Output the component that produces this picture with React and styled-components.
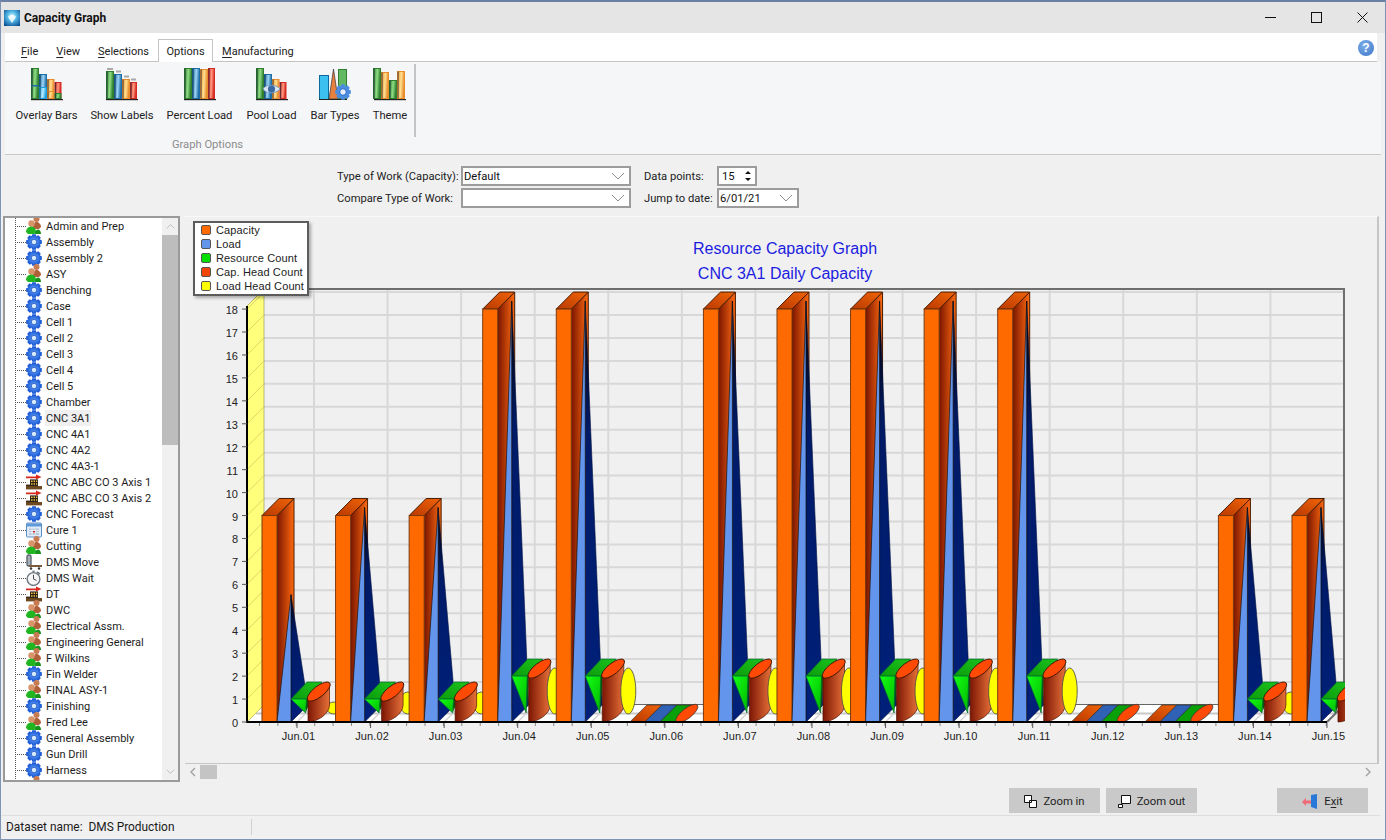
import React, { useId } from "react";
import styled, { createGlobalStyle } from "styled-components";

const UI = `Roboto, "Liberation Sans", sans-serif`;
const CHART = `"Liberation Sans", Arial, sans-serif`;

const Global = createGlobalStyle`
  html, body { margin: 0; padding: 0; background: #f0f0f0; overflow: hidden; }
  * { box-sizing: border-box; }
`;

const Window = styled.div`
  width: 1386px; height: 840px; display: flex; flex-direction: column;
  background: #f0f0f0; border: 1px solid #7f94b4; border-top: 2px solid #6a7fa4;
  font-family: ${UI}; font-size: 11px; color: #1a1a1a; overflow: hidden;
`;
const TitleBar = styled.div`
  height: 31px; flex: none; display: flex; align-items: center; background: #e5e5e5; padding-left: 3px;
`;
const AppTitle = styled.span`
  font-weight: 700; font-size: 12px; margin-left: 4px; color: #111; flex: 1;
`;
const WinButton = styled.div`
  width: 46px; height: 31px; display: flex; align-items: center; justify-content: center;
`;
const TabRow = styled.div`
  height: 29px; flex: none; margin: 0 8px 0 4px; background: #fff; border-bottom: 1px solid #c4c4c4;
  display: flex; align-items: flex-end; padding-left: 7px; position: relative;
`;
const Tab = styled.div`
  height: ${p => (p.$active ? "23px" : "22px")};
  padding: 2px 9px 0; display: flex; align-items: center; color: #222;
  ${p => p.$active && `border: 1px solid #c4c4c4; border-bottom: 0; background: #fff; margin-bottom: -1px; padding: 1px 7.5px 0;`}
`;
const Mnemonic = styled.span` text-decoration: underline; text-underline-offset: 2px; `;
const Help = styled.div`
  position: absolute; right: 3px; top: 7px; width: 16px; height: 16px; border-radius: 50%;
  background: radial-gradient(circle at 40% 35%, #7fb0ec, #3a73c4);
  color: #fff; font: 700 12px ${CHART}; display: flex; align-items: center; justify-content: center;
`;
const Ribbon = styled.div`
  height: 93px; flex: none; margin: 0 4px; background: #f5f6f8; border-bottom: 1px solid #c8c8c8; font-size: 11.2px;
`;
const RibbonGroup = styled.div`
  width: 411px; margin-top: 2px; display: flex; flex-direction: column;
`;
const RibbonButtons = styled.div`
  display: flex; gap: 14px; height: 73px; padding-left: 11px; border-right: 2px solid #c4c4c4;
`;
const RibbonButton = styled.div`
  display: flex; flex-direction: column; align-items: center; width: ${p => p.$w}px; white-space: nowrap;
`;
const RibbonIcon = styled.div` height: 42px; margin-top: 3px; `;
const RibbonLabel = styled.span` line-height: 14px; color: #222; `;
const GroupLabel = styled.div`
  text-align: center; color: #8c8c8c; padding-right: 6px; line-height: 14px; margin-top: 1px;
`;
const Filters = styled.div`
  height: 61px; flex: none; padding: 11px 0 0 336px; display: grid; font-size: 11.2px;
  grid-template-columns: 124px 170px 86px auto; grid-auto-rows: 20px; row-gap: 2px; align-items: center; justify-content: start;
`;
const FilterLabel = styled.span` white-space: nowrap; color: #222; padding-left: ${p => p.$pad || 0}px; `;
const Select = styled.div`
  height: 20px; width: ${p => p.$w}px; background: #fff; border: 2px solid #9c9c9c; display: flex; align-items: center;
  justify-content: space-between; padding: 0 4px 0 1px; color: #111;
`;
const Spinner = styled(Select)` padding-left: 3px; padding-right: 3px; `;
const Main = styled.div` flex: none; height: 566px; display: flex; padding-left: 2px; gap: 5px; align-items: flex-start; `;
const Tree = styled.div`
  width: 177px; height: 566px; flex: none; border: 2px solid #9a9a9a; background: #fff; display: flex;
`;
const TreeList = styled.div` flex: 1; overflow: hidden; `;
const TreeRow = styled.div` height: 16px; display: flex; align-items: center; padding-left: 10px; white-space: nowrap; `;
const Connector = styled.span`
  width: 11px; height: 16px; flex: none;
  background:
    repeating-linear-gradient(to bottom, #555 0 1px, transparent 1px 2px) 0 0 / 1px 100% no-repeat,
    repeating-linear-gradient(to right, #555 0 1px, transparent 1px 2px) 0 8px / 100% 1px no-repeat;
`;
const TreeLabel = styled.span`
  margin-left: 3px; padding: 1px 1px 0; line-height: 15px; color: #1c1c1c;
  background: ${p => (p.$selected ? "#f0f0f0" : "transparent")};
`;
const VScroll = styled.div` width: 16px; flex: none; background: #f0f0f0; display: flex; flex-direction: column; `;
const ScrollEnd = styled.div` height: 17px; flex: none; display: flex; align-items: center; justify-content: center; `;
const VThumb = styled.div` height: 210px; flex: none; background: #bdbdbd; `;
const Spacer = styled.div` flex: 1; `;
const ChartColumn = styled.div` width: 1194px; height: 564px; display: flex; flex-direction: column; `;
const ChartPanel = styled.div`
  position: relative; height: 548px; flex: none; background: #f0f0f0;
  border-top: 1px solid #f8f8f8; border-right: 2px solid #c6c6c6; border-bottom: 1px solid #c6c6c6;
  overflow: hidden;
`;
const ChartSvg = styled.svg` display: block; `;
const Legend = styled.div`
  position: absolute; left: 8px; top: 4px; width: 116px; height: 75px; background: #fff; border: 2px solid #5c5c5c;
  box-shadow: 2px 2px 3px rgba(0,0,0,.3); padding: 0 0 0 6px; font: 11px ${CHART}; letter-spacing: .12px; color: #222;
`;
const LegendRow = styled.div` height: 14px; display: flex; align-items: center; gap: 5px; white-space: nowrap; `;
const Swatch = styled.span`
  width: 10px; height: 10px; border: 1px solid #555; border-radius: 2px; background: ${p => p.$c}; flex: none;
`;
const HScroll = styled.div` height: 16px; flex: none; display: flex; align-items: center; padding-right: 4px; `;
const HEnd = styled.div` width: 15px; height: 16px; display: flex; align-items: center; justify-content: center; flex: none; `;
const HThumb = styled.div` width: 17px; height: 14px; background: #c4c4c4; flex: none; `;
const ButtonRow = styled.div`
  height: 34px; flex: none; display: flex; justify-content: flex-end; align-items: flex-start; gap: 6px; padding: 6px 12px 0 0;
  border-bottom: 1px solid #dedede; margin-right: 5px; font-size: 11.3px;
`;
const ActionButton = styled.div`
  width: 91px; height: 25px; background: #c9c9c9; display: flex; align-items: center; justify-content: center; gap: 6px; color: #222;
  padding-top: 2px; margin-left: ${p => p.$gap || 0}px;
`;
const StatusBar = styled.div` flex: 1; display: flex; align-items: center; padding: 0 0 2px 5px; `;
const StatusCell = styled.div` width: 246px; height: 16px; border-right: 1px solid #d0d0d0; line-height: 16px; white-space: pre; font-size: 11.9px; `;

/* ---------- icons ---------- */
function gearPath(cx, cy, R, r, n = 8) {
  let d = "";
  for (let i = 0; i < n; i++) {
    const a = (i / n) * Math.PI * 2, w = Math.PI / n;
    const p = (rad, ang) => `${(cx + rad * Math.cos(ang)).toFixed(2)} ${(cy + rad * Math.sin(ang)).toFixed(2)}`;
    d += `${i ? "L" : "M"}${p(r, a - w)} L${p(R, a - w * 0.55)} L${p(R, a + w * 0.55)} L${p(r, a + w)} `;
  }
  return d + "Z";
}
const Gear = ({ size = 16 }) => {
  const id = useId();
  return (
    <svg width={size} height={size} viewBox="0 0 16 16" style={{ flex: "none" }}>
      <defs><radialGradient id={id}><stop offset="0" stopColor="#6aa8ff" /><stop offset="1" stopColor="#1452d0" /></radialGradient></defs>
      <path d={gearPath(8, 8, 8, 6.3)} fill={`url(#${id})`} />
      <circle cx="8" cy="8" r="2.7" fill="#d8ebff" stroke="#0f48b8" strokeWidth=".7" />
    </svg>
  );
};
const People = () => (
  <svg width="16" height="16" viewBox="0 0 16 16" style={{ flex: "none", overflow: "visible" }}>
    <circle cx="10.5" cy="1" r="3" fill="#c87a50" />
    <path d="M7 9c0-3 1.5-5 3.5-5S15 6 15 9l-2 2H8z" fill="#b06038" />
    <circle cx="5.5" cy="5.5" r="3.2" fill="#d89468" />
    <path d="M0 14c0-3.5 2.6-5.6 5.2-5.6S10 10.5 10 14l-1.6 2H2z" fill="#22b522" />
    <path d="M9 16c0-3 1.5-4.6 3-4.6s3 1.6 3 4.6z" fill="#17921b" />
  </svg>
);
const Factory = () => (
  <svg width="16" height="16" viewBox="0 0 16 16" style={{ flex: "none" }}>
    <path d="M0 2.6h10V0.4L15.5 3 10 5.6V4.2H0z" fill="#d8281c" />
    <rect x="4" y="5.4" width="8" height="7.6" fill="#2a2218" />
    <path d="M5 6.4h1.5v1.6H5zm2.5 0H9v1.6H7.5zM10 6.4h1.2v1.6H10zM5 9.2h1.5v1.6H5zm2.5 0H9v1.6H7.5zM10 9.2h1.2v1.6H10z" fill="#f0c040" />
    <rect x="0" y="12" width="16" height="3.4" fill="#6e4a22" />
    <rect x="0" y="10.6" width="4" height="1.6" fill="#3a2a14" />
  </svg>
);
const Calendar = () => (
  <svg width="16" height="16" viewBox="0 0 16 16" style={{ flex: "none" }}>
    <rect x=".5" y="1" width="15" height="14" rx="1" fill="#dfeafa" stroke="#5e8fc4" />
    <rect x="1" y="1.5" width="14" height="3" fill="#5e9ad8" />
    <path d="M3 6.5h10v6.5H3z" fill="#b8c8dc" />
    <path d="M3 8.5h10M3 10.5h10M6 6.5v6.5M9 6.5v6.5" stroke="#fff" strokeWidth=".6" />
    <rect x="7" y="9" width="2" height="1.5" fill="#d8281c" />
  </svg>
);
const Cart = () => (
  <svg width="16" height="16" viewBox="0 0 16 16" style={{ flex: "none" }}>
    <rect x="1" y="1" width="4" height="11" rx="1.5" fill="#a8b0b8" stroke="#5c6670" strokeWidth="1.4" />
    <path d="M3 11h13v2H3z" fill="#7a5a3a" />
    <circle cx="5" cy="14.5" r="1.2" fill="#333" />
    <circle cx="13" cy="14.5" r="1.2" fill="#333" />
  </svg>
);
const Clock = () => (
  <svg width="16" height="16" viewBox="0 0 16 16" style={{ flex: "none" }}>
    <circle cx="7.5" cy="9" r="6.4" fill="#f6f6f6" stroke="#6f7780" strokeWidth="1.4" />
    <path d="M7.5 9V4.8M7.5 9l3 1.4" stroke="#334" strokeWidth=".9" />
    <path d="M11 2l2.8 2" stroke="#6f7780" strokeWidth="1.6" />
    <rect x="6.4" y="0.6" width="2.2" height="1.6" fill="#6f7780" />
  </svg>
);
const TREE_ICONS = { g: Gear, p: People, f: Factory, c: Calendar, m: Cart, w: Clock };

const COL = {
  g: ["#2f7f2f", "#8fdc84"], b: ["#1c6ea8", "#9ed4f4"], o: ["#e88c2c", "#ffe090"], r: ["#d62a22", "#ff9a80"],
  c: ["#1aa0e0", "#b8ecff"],
};
const IconBar = ({ x, y, w, h, c, id }) => (
  <g>
    <rect x={x + .5} y={y + .5} width={w - 1} height={h - 1} fill={`url(#${id}${c})`} stroke={COL[c][0]} strokeWidth="1" />
    <rect x={x + 0.5} y={y + .5} width={1.2} height={h - 1} fill="#123" opacity=".6" />
  </g>
);
const BarIcon = ({ bars, children }) => {
  const id = useId().replace(/[^a-zA-Z0-9]/g, "");
  return (
    <svg width="36" height="36" viewBox="0 0 36 36">
      <defs>
        {Object.keys(COL).map(k => (
          <linearGradient key={k} id={id + k} x1="0" x2="1" y1="0" y2="0.2">
            <stop offset="0" stopColor={COL[k][0]} /><stop offset=".55" stopColor={COL[k][1]} /><stop offset="1" stopColor={COL[k][0]} />
          </linearGradient>
        ))}
      </defs>
      {bars.map((b, i) => <IconBar key={i} id={id} x={b[0]} y={b[1]} w={b[2]} h={b[3]} c={b[4]} />)}
      <rect x="2" y="32" width="32" height="1.2" fill="#222" />
      {children}
    </svg>
  );
};
const overlayBars = [[2, 1, 8, 31, "g"], [10, 7, 8, 25, "b"], [18, 12, 7.5, 20, "o"], [25.5, 15, 7, 17, "r"]];
const RIBBON = [
  { label: "Overlay Bars", w: 61, icon: <BarIcon bars={[...overlayBars, [2, 18, 8, 1.5, "b"], [10, 20, 8, 12, "c"], [18, 24, 7.5, 8, "o"], [25.5, 26, 7, 6, "g"]]} /> },
  { label: "Show Labels", w: 62, icon: <BarIcon bars={[[2, 4, 8, 28, "g"], [10, 7, 8, 25, "b"], [18, 12, 8, 20, "o"], [26, 15, 7, 17, "r"]]}>
    <path d="M3 1h6v2H3zM12 3.5h5v2h-5zM20 8.5h5v2h-5zM27 11.5h5v2h-5z" fill="#777" opacity=".6" /></BarIcon> },
  { label: "Percent Load", w: 65, icon: <BarIcon bars={[[2, 1, 8, 31, "g"], [10, 1, 8, 31, "b"], [18, 2, 8, 30, "o"], [26, 1, 7, 31, "r"]]} /> },
  { label: "Pool Load", w: 51, icon: <BarIcon bars={overlayBars}>
    <path d="M9 22c3-5 13-5 17 0-4 5-14 5-17 0z" fill="#dbe8f4" stroke="#7c9cc0" /><circle cx="17.5" cy="22" r="3.6" fill="#3a6aa4" /></BarIcon> },
  { label: "Bar Types", w: 48, icon: <svg width="36" height="36" viewBox="0 0 36 36">
      <rect x="2.5" y="8.5" width="9" height="24" fill="#3cc0f0" stroke="#0e6a9c" />
      <path d="M12 32 L16.5 2 L21 32z" fill="#e88040" stroke="#333" strokeWidth=".7" />
      <rect x="21.5" y="2.5" width="8" height="29" fill="#63b863" stroke="#2f7f2f" />
      <path d="M2 32.5h28" stroke="#222" />
      <path d={gearPath(26, 25, 8, 6.2)} fill="#4b8ee0" /><circle cx="26" cy="25" r="3.3" fill="#e4f0ff" stroke="#2a6ac4" />
    </svg> },
  { label: "Theme", w: 34, icon: <BarIcon bars={[[1, 1, 8, 31, "g"], [9, 5, 8, 27, "o"], [17, 13, 8, 19, "g"], [25, 4, 8, 28, "o"]]} /> },
];

const TREE = [
  ["Admin and Prep", "p"], ["Assembly", "g"], ["Assembly 2", "g"], ["ASY", "p"], ["Benching", "g"], ["Case", "g"],
  ["Cell 1", "g"], ["Cell 2", "g"], ["Cell 3", "g"], ["Cell 4", "g"], ["Cell 5", "g"], ["Chamber", "g"],
  ["CNC 3A1", "g", true], ["CNC 4A1", "g"], ["CNC 4A2", "g"], ["CNC 4A3-1", "g"],
  ["CNC ABC CO 3 Axis 1", "f"], ["CNC ABC CO 3 Axis 2", "f"], ["CNC Forecast", "g"], ["Cure 1", "c"], ["Cutting", "p"],
  ["DMS Move", "m"], ["DMS Wait", "w"], ["DT", "f"], ["DWC", "p"], ["Electrical Assm.", "p"], ["Engineering General", "p"],
  ["F Wilkins", "p"], ["Fin Welder", "g"], ["FINAL ASY-1", "p"], ["Finishing", "g"], ["Fred Lee", "p"],
  ["General Assembly", "g"], ["Gun Drill", "g"], ["Harness", "g"], ["", "p"],
];

/* ---------- chart drawing (page coordinates through viewBox) ---------- */
const BASE = 722, UNIT = 22.94, STEP = 73.57, DEPTH = 17;
const Y = v => BASE - v * UNIT;
const CAP = [9, 9, 9, 18, 18, 0, 18, 18, 18, 18, 18, 0, 0, 9, 9];
const LOAD = [5.2, 9, 9, 18, 18, 0, 18, 18, 18, 18, 18, 0, 0, 9, 9];
const RES = [1, 1, 1, 2, 2, 0, 2, 2, 2, 2, 2, 0, 0, 1, 1];
const EDGE = "#4a1c00";
const pts = a => a.map(p => p.join(",")).join(" ");

const Column = ({ i }) => {
  const x = 262 + STEP * i;
  const cap = CAP[i], res = RES[i];
  if (!cap) {
    const para = (a, w, fill) => <polygon points={pts([[x + a, BASE], [x + a + DEPTH, BASE - DEPTH], [x + a + DEPTH + w, BASE - DEPTH], [x + a + w, BASE]])} fill={fill} stroke="#222" strokeWidth=".6" />;
    return (
      <g>
        {para(0, 15, "url(#capTop)")}
        {para(15, 15, "#2f62b4")}
        {para(30, 15, "#0aa00a")}
        <ellipse cx={x + 57} cy={BASE - 8.5} rx="13.5" ry="5" transform={`rotate(-38 ${x + 57} ${BASE - 8.5})`} fill="#ff4a05" stroke="#333" strokeWidth=".7" />
      </g>
    );
  }
  const ty = Y(cap), ay = Y(LOAD[i]) - 8, gy = Y(res);
  const l = x + 46, r = x + 67.5;
  const yellowRy = i === 0 ? 6 : res === 1 ? 11 : 23;
  const yellowCy = 714 - yellowRy;
  const yellow = <ellipse cx={x + 72} cy={yellowCy} rx="7.5" ry={yellowRy} fill="#ffff00" stroke="#444" strokeWidth=".8" />;
  return (
    <g>
      <polygon points={pts([[x + 15, ty], [x + 32, ty - DEPTH], [x + 32, BASE - DEPTH], [x + 15, BASE]])} fill="url(#capSide)" stroke={EDGE} strokeWidth="1" />
      <polygon points={pts([[x, ty], [x + DEPTH, ty - DEPTH], [x + 32, ty - DEPTH], [x + 15, ty]])} fill="url(#capTop)" stroke={EDGE} strokeWidth="1" />
      <rect x={x} y={ty} width="15" height={BASE - ty} fill="#ff6a00" stroke="#7a3a10" strokeWidth="1" />
      <polygon points={pts([[x + 29, BASE], [x + 29, ay], [x + 46, BASE - DEPTH]])} fill="url(#loadSide)" stroke="#001040" strokeWidth=".6" />
      <polygon points={pts([[x + 15, BASE], [x + 29, ay], [x + 29, BASE]])} fill="#6495ed" stroke="#111" strokeWidth=".7" />
      <polygon points={pts([[x + 29, gy], [x + 45, gy - DEPTH], [x + 60, gy - DEPTH], [x + 45.5, gy]])} fill="url(#greenTop)" stroke="#063" strokeWidth=".7" />
      <polygon points={pts([[x + 44, gy], [x + 46, gy], [x + 46, gy + 8], [x + 44, 712]])} fill="#045c04" />
      <polygon points={pts([[x + 29, gy], [x + 44.5, gy], [x + 43.5, 713]])} fill="url(#greenFront)" stroke="#063" strokeWidth=".7" />
      {res === 1 && yellow}
      <path d={`M${l} ${gy} L${l} ${BASE} C${l + 9} ${BASE} ${r} ${BASE - 8} ${r} ${BASE - DEPTH} L${r} ${gy - 15} Z`} fill="url(#cyl)" stroke="#501400" strokeWidth=".7" />
      <ellipse cx={(l + r) / 2} cy={gy - 7.5} rx="14" ry="5.4" transform={`rotate(-38 ${(l + r) / 2} ${gy - 7.5})`} fill="#ff4a05" stroke="#301000" strokeWidth=".8" />
      {res !== 1 && yellow}
    </g>
  );
};

const Chart = () => {
  const values = Array.from({ length: 19 }, (_, v) => v);
  const cols = Array.from({ length: 15 }, (_, i) => i);
  const minor = Array.from({ length: 59 }, (_, i) => 260 + i * (STEP / 4) - 0.5).filter(t => t < 1329);
  return (
    <ChartSvg width="1192" height="546" viewBox="185 217 1192 546">
      <defs>
        <linearGradient id="capSide" x1="0" x2="1" y1="0" y2="0"><stop offset="0" stopColor="#7a1500" /><stop offset="1" stopColor="#ff6a10" /></linearGradient>
        <linearGradient id="capTop" x1="0" x2="1" y1="1" y2="0"><stop offset="0" stopColor="#b83800" /><stop offset="1" stopColor="#f06408" /></linearGradient>
        <linearGradient id="loadSide" x1="0" x2="0" y1="0" y2="1"><stop offset="0" stopColor="#000" /><stop offset=".3" stopColor="#001a66" /><stop offset="1" stopColor="#00207a" /></linearGradient>
        <linearGradient id="greenTop" x1="0" x2="1" y1="1" y2="0"><stop offset="0" stopColor="#0b9c0b" /><stop offset="1" stopColor="#1cc21c" /></linearGradient>
        <linearGradient id="greenFront" x1="0" x2="1" y1="0" y2="1"><stop offset="0" stopColor="#14ff14" /><stop offset="1" stopColor="#00b800" /></linearGradient>
        <linearGradient id="cyl" x1="0" x2="1" y1="0" y2="0"><stop offset="0" stopColor="#7c1604" /><stop offset="1" stopColor="#e67038" /></linearGradient>
        <clipPath id="plot"><rect x="185" y="217" width="1160" height="546" /></clipPath>
      </defs>
      {/* back wall */}
      <rect x="264" y="289" width="1080" height="416" fill="#f0f0f0" />
      {values.map(v => <line key={v} x1="264" x2="1344" y1={Y(v) - DEPTH} y2={Y(v) - DEPTH} stroke="#d8d8d8" strokeWidth="2" />)}
      {cols.map(i => <line key={i} x1={314 + STEP * i} x2={314 + STEP * i} y1="289" y2="705" stroke="#d8d8d8" strokeWidth="2" />)}
      {/* floor */}
      <polygon points="247,722 264,705 1344,705 1327,722" fill="#fff" />
      <line x1="256" x2="1335" y1="713.5" y2="713.5" stroke="#c8c8c8" strokeWidth="2" />
      {cols.map(i => <line key={i} x1={297 + STEP * i} x2={314 + STEP * i} y1="722" y2="705" stroke="#d4d4d4" strokeWidth="1.5" />)}
      <line x1="264" x2="1344" y1="704.5" y2="704.5" stroke="#666" strokeWidth="1" />
      {/* left wall */}
      <polygon points="247,306 264,289 264,705 247,722" fill="#ffff7c" stroke="#8a8a50" strokeWidth=".6" />
      {values.map(v => <line key={v} x1="247" x2="264" y1={Y(v)} y2={Y(v) - DEPTH} stroke="#d8c860" strokeWidth=".8" />)}
      {/* frame */}
      <path d="M264 289H1344V705L1327 722" fill="none" stroke="#6e6e6e" strokeWidth="2" />
      {/* bars */}
      <g clipPath="url(#plot)">{cols.map(i => <Column key={i} i={i} />)}</g>
      {/* axes */}
      <path d="M247 306V722H1327" fill="none" stroke="#000" strokeWidth="2" />
      {values.map(v => <line key={v} x1="242" x2="247" y1={Y(v)} y2={Y(v)} stroke="#555" />)}
      {minor.map((t, i) => <line key={i} x1={t} x2={t} y1="723" y2="726" stroke="#888" />)}
      {cols.map(i => <line key={i} x1={297 + STEP * i} x2={297 + STEP * i} y1="723" y2="728" stroke="#555" />)}
      {values.map(v => <text key={v} x="238" y={Y(v) + 5} textAnchor="end" fontFamily={CHART} fontSize="11" fill="#222">{v}</text>)}
      {cols.map(i => <text key={i} x={298.5 + STEP * i} y="740" textAnchor="middle" fontFamily={CHART} fontSize="11" letterSpacing=".1" fill="#222">{`Jun.${String(i + 1).padStart(2, "0")}`}</text>)}
      <text x="785" y="254" textAnchor="middle" fontFamily={CHART} fontSize="16" fill="#1c1ce0">Resource Capacity Graph</text>
      <text x="785" y="279" textAnchor="middle" fontFamily={CHART} fontSize="16" fill="#1c1ce0">CNC 3A1 Daily Capacity</text>
    </ChartSvg>
  );
};

const Chevron = ({ dir = "down", color = "#909090", w = 14, h = 8 }) => {
  const d = { down: "M1 1 L7 7 L13 1", up: "M1 7 L7 1 L13 7" }[dir];
  return <svg width={w} height={h} viewBox="0 0 14 8"><path d={d} fill="none" stroke={color} strokeWidth="1" /></svg>;
};
const SmallChevron = ({ dir }) => <Chevron dir={dir} color="#a0a0a0" w={9} h={5} />;
const SideChevron = ({ dir }) => <svg width="6" height="10" viewBox="0 0 6 10"><path d={dir === "left" ? "M5 1L1 5l4 4" : "M1 1l4 4-4 4"} fill="none" stroke="#a0a0a0" strokeWidth="1.4" /></svg>;

const LEGEND = [["Capacity", "#ff6a00"], ["Load", "#6495ed"], ["Resource Count", "#00e000"], ["Cap. Head Count", "#f04408"], ["Load Head Count", "#ffff00"]];

export default function App() {
  return (
    <>
      <Global />
      <Window>
        <TitleBar>
          <svg width="16" height="16" viewBox="0 0 16 16">
            <defs><radialGradient id="appLogo" cy=".4" r=".7"><stop offset="0" stopColor="#e8fbff" /><stop offset=".4" stopColor="#58bde8" /><stop offset="1" stopColor="#0a4f94" /></radialGradient></defs>
            <rect width="16" height="16" fill="url(#appLogo)" />
            <path d="M4 7c2-3 6-3 8 0L8 13z" fill="#f4fcff" opacity=".85" />
          </svg>
          <AppTitle>Capacity Graph</AppTitle>
          <WinButton><svg width="11" height="11"><path d="M0 5.5h11" stroke="#111" /></svg></WinButton>
          <WinButton><svg width="11" height="11"><rect x=".5" y=".5" width="10" height="10" fill="none" stroke="#111" /></svg></WinButton>
          <WinButton><svg width="11" height="11"><path d="M.5.5l10 10M10.5.5l-10 10" stroke="#111" /></svg></WinButton>
        </TitleBar>
        <TabRow>
          <Tab><Mnemonic>F</Mnemonic>ile</Tab>
          <Tab><Mnemonic>V</Mnemonic>iew</Tab>
          <Tab><Mnemonic>S</Mnemonic>elections</Tab>
          <Tab $active>Options</Tab>
          <Tab><Mnemonic>M</Mnemonic>anufacturing</Tab>
          <Help>?</Help>
        </TabRow>
        <Ribbon>
          <RibbonGroup>
            <RibbonButtons>
              {RIBBON.map(b => (
                <RibbonButton key={b.label} $w={b.w}>
                  <RibbonIcon>{b.icon}</RibbonIcon>
                  <RibbonLabel>{b.label}</RibbonLabel>
                </RibbonButton>
              ))}
            </RibbonButtons>
            <GroupLabel>Graph Options</GroupLabel>
          </RibbonGroup>
        </Ribbon>
        <Filters>
          <FilterLabel>Type of Work (Capacity):</FilterLabel>
          <Select $w={170}>Default<Chevron /></Select>
          <FilterLabel $pad={13}>Data points:</FilterLabel>
          <Spinner $w={40}>15
            <svg width="8" height="12" viewBox="0 0 8 12"><path d="M4 1l3 3H1zM4 11L1 8h6z" fill="#111" /></svg>
          </Spinner>
          <FilterLabel>Compare Type of Work:</FilterLabel>
          <Select $w={170}><span /><Chevron /></Select>
          <FilterLabel $pad={13}>Jump to date:</FilterLabel>
          <Select $w={82}>6/01/21<Chevron /></Select>
        </Filters>
        <Main>
          <Tree>
            <TreeList>
              {TREE.map(([label, kind, selected], i) => {
                const Icon = TREE_ICONS[kind];
                return (
                  <TreeRow key={i}>
                    <Connector />
                    <Icon />
                    <TreeLabel $selected={selected}>{label}</TreeLabel>
                  </TreeRow>
                );
              })}
            </TreeList>
            <VScroll>
              <ScrollEnd><SmallChevron dir="up" /></ScrollEnd>
              <VThumb />
              <Spacer />
              <ScrollEnd><SmallChevron dir="down" /></ScrollEnd>
            </VScroll>
          </Tree>
          <ChartColumn>
            <ChartPanel>
              <Chart />
              <Legend>
                {LEGEND.map(([t, c]) => <LegendRow key={t}><Swatch $c={c} />{t}</LegendRow>)}
              </Legend>
            </ChartPanel>
            <HScroll>
              <HEnd><SideChevron dir="left" /></HEnd>
              <HThumb />
              <Spacer />
              <HEnd><SideChevron dir="right" /></HEnd>
            </HScroll>
          </ChartColumn>
        </Main>
        <ButtonRow>
          <ActionButton>
            <svg width="13" height="13" viewBox="0 0 13 13"><path d="M.5.5h7v7h-7z M5.5 5.5h7v7h-7z" fill="#fff" stroke="#111" /></svg>Zoom in
          </ActionButton>
          <ActionButton>
            <svg width="13" height="13" viewBox="0 0 13 13"><path d="M.5 9.5h4v3h-4z" fill="#fff" stroke="#111" /><path d="M3.5.5h9v8h-9z" fill="#fff" stroke="#111" /></svg>Zoom out
          </ActionButton>
          <ActionButton $gap={74}>
            <svg width="16" height="15" viewBox="0 0 16 15"><path d="M9 1l6-1v15l-6-2z" fill="#2a78d8" /><path d="M0 8l4-4v2.5h5v3H4V12z" fill="#f06a78" /></svg>
            <span>E<Mnemonic>x</Mnemonic>it</span>
          </ActionButton>
        </ButtonRow>
        <StatusBar><StatusCell>Dataset name:  DMS Production</StatusCell></StatusBar>
      </Window>
    </>
  );
}
